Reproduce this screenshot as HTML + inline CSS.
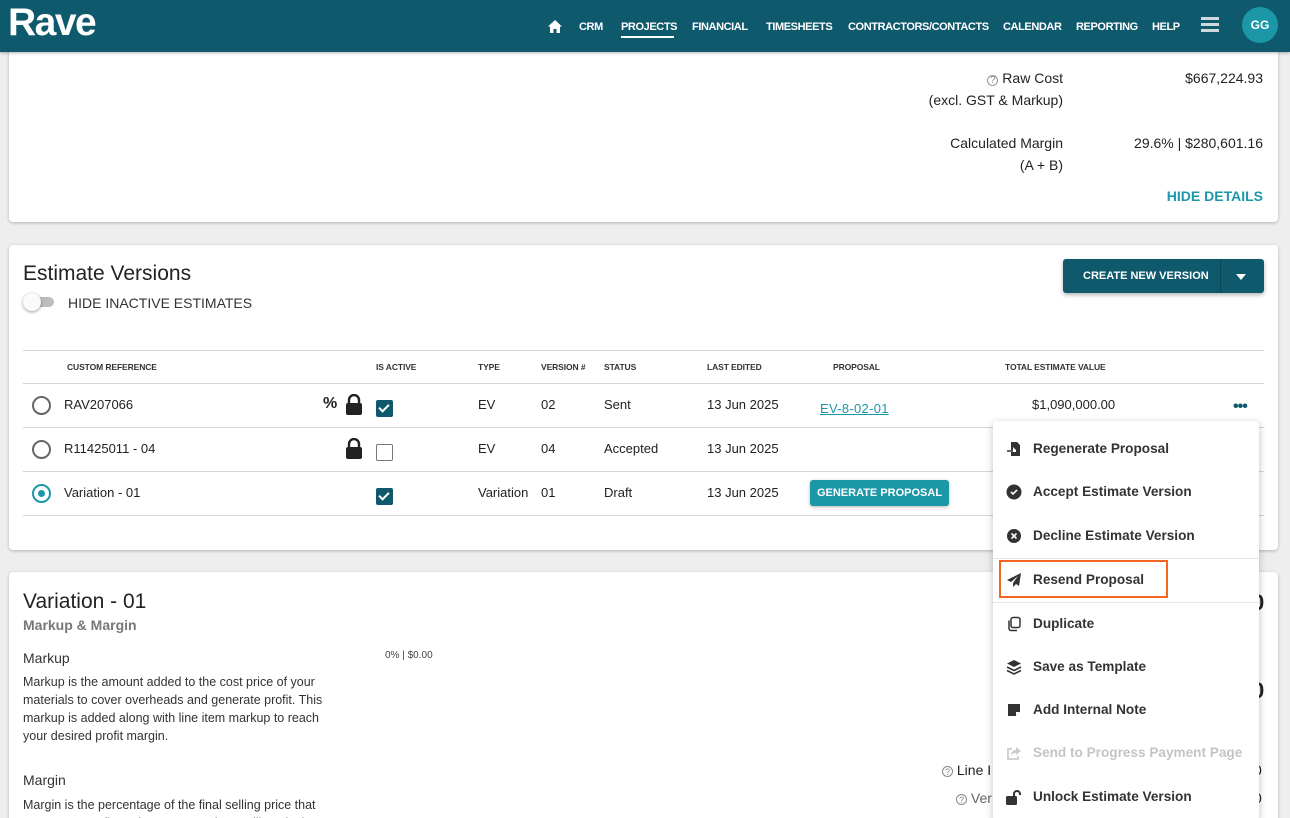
<!DOCTYPE html>
<html><head><meta charset="utf-8"><style>
*{box-sizing:border-box;margin:0;padding:0}
html,body{width:1290px;height:818px;overflow:hidden}
body{background:#eeeeee;font-family:"Liberation Sans",Arial,sans-serif;color:#222;position:relative}
.abs{position:absolute}
.hdr{left:0;top:0;width:1290px;height:52px;background:#0f596d;box-shadow:0 1px 3px rgba(0,0,0,.3);z-index:5}
.logo{left:8px;top:1px;color:#fff;font-size:39px;font-weight:bold;letter-spacing:-1.5px}
.nav{top:21px;color:#fff;font-size:11px;font-weight:bold;letter-spacing:-.4px}
.card{background:#fff;border-radius:4px;box-shadow:0 1px 3px rgba(0,0,0,.25)}
.r{text-align:right}
.th{font-size:8.5px;font-weight:bold;color:#333;letter-spacing:-.1px}
.td{font-size:13px;color:#222}
.line{height:1px;background:#d6d6d6}
.radio{width:19px;height:19px;border:2px solid #666;border-radius:50%}
.cb{width:17px;height:17px;border-radius:2px;background:#0f596d}
.cb:after{content:"";position:absolute;left:5px;top:2px;width:4px;height:8px;border:solid #fff;border-width:0 2px 2px 0;transform:rotate(45deg)}
.menu{left:993px;top:421px;width:266px;height:400px;background:#fff;border-radius:4px;box-shadow:0 2px 8px rgba(0,0,0,.25);z-index:4}
.mi{left:40px;font-size:13.6px;font-weight:bold;color:#333}
.ic{left:13px;width:16px;height:16px}
</style></head><body>
<div class="abs hdr">
 <div class="abs logo">Rave</div>
 <svg class="abs" style="left:548px;top:20px" width="14" height="13" viewBox="0 0 14 13"><path d="M7 0L0 6.5h2V13h3.5V9h3v4H12V6.5h2z" fill="#fff"/></svg>
 <div class="abs nav" style="left:579px">CRM</div>
 <div class="abs nav" style="left:621px">PROJECTS</div>
 <div class="abs" style="left:621px;top:36px;width:53px;height:2px;background:#fff"></div>
 <div class="abs nav" style="left:692px">FINANCIAL</div>
 <div class="abs nav" style="left:766px">TIMESHEETS</div>
 <div class="abs nav" style="left:848px">CONTRACTORS/CONTACTS</div>
 <div class="abs nav" style="left:1003px">CALENDAR</div>
 <div class="abs nav" style="left:1076px">REPORTING</div>
 <div class="abs nav" style="left:1152px">HELP</div>
 <div class="abs" style="left:1201px;top:17px;width:18px;height:3px;background:#cfd8dc;box-shadow:0 6px 0 #cfd8dc,0 12px 0 #cfd8dc"></div>
 <div class="abs" style="left:1242px;top:7px;width:36px;height:36px;border-radius:50%;background:#1b97a8;color:#fff;font-size:12px;font-weight:bold;text-align:center;line-height:36px">GG</div>
</div>

<div class="abs card" style="left:9px;top:30px;width:1269px;height:192px"></div>
<div class="abs r" style="left:900px;top:67px;width:163px;font-size:14px;line-height:22px;color:#222"><span style="font-size:10px;color:#888;border:1px solid #999;border-radius:50%;display:inline-block;width:11px;height:11px;line-height:10px;text-align:center">?</span> Raw Cost<br>(excl. GST &amp; Markup)</div>
<div class="abs r" style="left:1100px;top:70px;width:163px;font-size:14px;line-height:17px">$667,224.93</div>
<div class="abs r" style="left:900px;top:132px;width:163px;font-size:14px;line-height:22px">Calculated Margin<br>(A + B)</div>
<div class="abs r" style="left:1100px;top:135px;width:163px;font-size:14px;line-height:17px">29.6% | $280,601.16</div>
<div class="abs r" style="left:1100px;top:188px;width:163px;font-size:14px;font-weight:bold;color:#1b97a8">HIDE DETAILS</div>

<div class="abs card" style="left:9px;top:245px;width:1269px;height:305px"></div>
<div class="abs" style="left:23px;top:262px;font-size:21px;color:#222">Estimate Versions</div>
<div class="abs" style="left:27px;top:297px;width:27px;height:10px;border-radius:5px;background:#bdbdbd"></div>
<div class="abs" style="left:23px;top:293px;width:18px;height:18px;border-radius:50%;background:#fafafa;box-shadow:0 1px 3px rgba(0,0,0,.4)"></div>
<div class="abs" style="left:68px;top:295px;font-size:14px;color:#333">HIDE INACTIVE ESTIMATES</div>
<div class="abs" style="left:1063px;top:259px;width:201px;height:34px;background:#0f596d;border-radius:3px;box-shadow:0 2px 4px rgba(0,0,0,.3)"></div>
<div class="abs" style="left:1083px;top:270px;font-size:11px;font-weight:bold;color:#fff">CREATE NEW VERSION</div>
<div class="abs" style="left:1220px;top:259px;width:1px;height:34px;background:#0b4655"></div>
<div class="abs" style="left:1236px;top:274px;border:5px solid transparent;border-top:6px solid #fff"></div>

<div class="abs line" style="left:23px;top:350px;width:1241px"></div>
<div class="abs th" style="left:67px;top:362px">CUSTOM REFERENCE</div>
<div class="abs th" style="left:376px;top:362px">IS ACTIVE</div>
<div class="abs th" style="left:478px;top:362px">TYPE</div>
<div class="abs th" style="left:541px;top:362px">VERSION #</div>
<div class="abs th" style="left:604px;top:362px">STATUS</div>
<div class="abs th" style="left:707px;top:362px">LAST EDITED</div>
<div class="abs th" style="left:833px;top:362px">PROPOSAL</div>
<div class="abs th" style="left:1005px;top:362px">TOTAL ESTIMATE VALUE</div>
<div class="abs line" style="left:23px;top:383px;width:1241px"></div>
<div class="abs line" style="left:23px;top:427px;width:1241px"></div>
<div class="abs line" style="left:23px;top:471px;width:1241px"></div>
<div class="abs line" style="left:23px;top:515px;width:1241px"></div>

<div class="abs radio" style="left:32px;top:396px"></div>
<div class="abs td" style="left:64px;top:397px">RAV207066</div>
<div class="abs" style="left:323px;top:395px;font-size:16px;font-weight:bold">%</div>
<svg class="abs" style="left:345px;top:394px" width="18" height="21" viewBox="0 0 18 21"><path d="M4 9V6a5 5 0 0110 0v3" stroke="#222" stroke-width="2.4" fill="none"/><rect x="1" y="9" width="16" height="12" rx="2" fill="#222"/></svg>
<div class="abs cb" style="left:376px;top:400px"></div>
<div class="abs td" style="left:478px;top:397px">EV</div>
<div class="abs td" style="left:541px;top:397px">02</div>
<div class="abs td" style="left:604px;top:397px">Sent</div>
<div class="abs td" style="left:707px;top:397px">13 Jun 2025</div>
<div class="abs td" style="left:820px;top:401px;color:#1b97a8;text-decoration:underline;letter-spacing:.3px">EV-8-02-01</div>
<div class="abs td" style="left:1032px;top:397px">$1,090,000.00</div>
<div class="abs" style="left:1233px;top:398px;font-size:16px;font-weight:bold;color:#0f596d;letter-spacing:-1px">•••</div>

<div class="abs radio" style="left:32px;top:440px"></div>
<div class="abs td" style="left:64px;top:441px">R11425011 - 04</div>
<svg class="abs" style="left:345px;top:438px" width="18" height="21" viewBox="0 0 18 21"><path d="M4 9V6a5 5 0 0110 0v3" stroke="#222" stroke-width="2.4" fill="none"/><rect x="1" y="9" width="16" height="12" rx="2" fill="#222"/></svg>
<div class="abs" style="left:376px;top:444px;width:17px;height:17px;border:1.5px solid #777;border-radius:2px"></div>
<div class="abs td" style="left:478px;top:441px">EV</div>
<div class="abs td" style="left:541px;top:441px">04</div>
<div class="abs td" style="left:604px;top:441px">Accepted</div>
<div class="abs td" style="left:707px;top:441px">13 Jun 2025</div>

<div class="abs radio" style="left:32px;top:484px;border-color:#1b97a8"></div>
<div class="abs" style="left:38px;top:490px;width:7px;height:7px;border-radius:50%;background:#1b97a8"></div>
<div class="abs td" style="left:64px;top:485px">Variation - 01</div>
<div class="abs cb" style="left:376px;top:488px"></div>
<div class="abs td" style="left:478px;top:485px">Variation</div>
<div class="abs td" style="left:541px;top:485px">01</div>
<div class="abs td" style="left:604px;top:485px">Draft</div>
<div class="abs td" style="left:707px;top:485px">13 Jun 2025</div>
<div class="abs" style="left:810px;top:480px;width:139px;height:26px;background:#1b97a8;border-radius:3px;box-shadow:0 1px 3px rgba(0,0,0,.3);color:#fff;font-size:11px;font-weight:bold;text-align:center;line-height:26px">GENERATE PROPOSAL</div>

<div class="abs card" style="left:9px;top:572px;width:1269px;height:260px"></div>
<div class="abs" style="left:23px;top:590px;font-size:21px;color:#222">Variation - 01</div>
<div class="abs" style="left:23px;top:617px;font-size:14px;font-weight:bold;color:#777">Markup &amp; Margin</div>
<div class="abs" style="left:23px;top:650px;font-size:14px;color:#333">Markup</div>
<div class="abs" style="left:385px;top:650px;font-size:10px;color:#444">0% | $0.00</div>
<div class="abs" style="left:23px;top:673px;width:318px;font-size:12.5px;line-height:18px;color:#333">Markup is the amount added to the cost price of your materials to cover overheads and generate profit. This markup is added along with line item markup to reach your desired profit margin.</div>
<div class="abs" style="left:23px;top:772px;font-size:14px;color:#333">Margin</div>
<div class="abs" style="left:23px;top:796px;width:318px;font-size:12.5px;line-height:18px;color:#333">Margin is the percentage of the final selling price that represents profit. Truly represented, we will apply the</div>
<div class="abs" style="left:942px;top:762px;font-size:14px;color:#222"><span style="font-size:9px;border:1px solid #888;border-radius:50%;display:inline-block;width:11px;height:11px;line-height:10px;text-align:center;color:#888">?</span> Line I</div>
<div class="abs" style="left:956px;top:790px;font-size:14px;color:#666"><span style="font-size:9px;border:1px solid #888;border-radius:50%;display:inline-block;width:11px;height:11px;line-height:10px;text-align:center;color:#888">?</span> Ver</div>
<div class="abs" style="left:1252px;top:590px;font-size:22px;font-weight:bold">0</div>
<div class="abs" style="left:1252px;top:678px;font-size:22px;font-weight:bold">0</div>
<div class="abs" style="left:1254px;top:762px;font-size:14px">0</div>
<div class="abs" style="left:1254px;top:790px;font-size:14px">0</div>

<div class="abs menu">
 <svg class="abs ic" style="top:20px" viewBox="0 0 16 16"><path d="M5 1h6l3 3v11H5v-4h5V9L7 6v3H5z" fill="#333"/><path d="M1 10h6" stroke="#333" stroke-width="1.5"/></svg>
 <div class="abs mi" style="top:20px">Regenerate Proposal</div>
 <svg class="abs ic" style="top:63px" viewBox="0 0 16 16"><circle cx="8" cy="8" r="7.5" fill="#333"/><path d="M5 8l2 2 4-4" stroke="#fff" stroke-width="1.6" fill="none"/></svg>
 <div class="abs mi" style="top:63px">Accept Estimate Version</div>
 <svg class="abs ic" style="top:107px" viewBox="0 0 16 16"><circle cx="8" cy="8" r="7" fill="#333"/><path d="M5.5 5.5l5 5M10.5 5.5l-5 5" stroke="#fff" stroke-width="1.6"/></svg>
 <div class="abs mi" style="top:107px">Decline Estimate Version</div>
 <div class="abs" style="left:0;top:137px;width:266px;height:1px;background:#e2e6ea"></div>
 <div class="abs" style="left:6px;top:139px;width:169px;height:38px;border:2px solid #f26522"></div>
 <svg class="abs ic" style="top:151px" viewBox="0 0 16 16"><path d="M15 1L1 8l4 2 7-6-5 7v4l3-3 3 2z" fill="#333"/></svg>
 <div class="abs mi" style="top:151px">Resend Proposal</div>
 <div class="abs" style="left:0;top:181px;width:266px;height:1px;background:#e2e6ea"></div>
 <svg class="abs ic" style="top:195px" viewBox="0 0 16 16"><rect x="5" y="1.5" width="9" height="10" rx="2" stroke="#333" stroke-width="1.5" fill="none"/><path d="M3 4.5v8a2 2 0 002 2h6" stroke="#333" stroke-width="1.5" fill="none"/></svg>
 <div class="abs mi" style="top:195px">Duplicate</div>
 <svg class="abs ic" style="top:238px" viewBox="0 0 16 16"><path d="M8 1l7 3.5-7 3.5-7-3.5z" fill="#333"/><path d="M1 8l7 3.5L15 8M1 11.5L8 15l7-3.5" stroke="#333" stroke-width="1.6" fill="none"/></svg>
 <div class="abs mi" style="top:238px">Save as Template</div>
 <svg class="abs ic" style="top:281px" viewBox="0 0 16 16"><path d="M2 2h12v8l-4 4H2z" fill="#333"/><path d="M10 14v-4h4" fill="#fff"/></svg>
 <div class="abs mi" style="top:281px">Add Internal Note</div>
 <svg class="abs ic" style="top:324px" viewBox="0 0 16 16"><path d="M6 4H2v10h10v-3" stroke="#ccc" stroke-width="1.8" fill="none"/><path d="M10 2l5 4-5 4V8c-3 0-4 1-5 3 0-4 2-6 5-6z" fill="#ccc"/></svg>
 <div class="abs mi" style="top:324px;color:#c4c4c4">Send to Progress Payment Page</div>
 <svg class="abs ic" style="top:368px" viewBox="0 0 16 16"><rect x="0" y="7" width="11" height="9" rx="1.5" fill="#333"/><path d="M8 7V5a3 3 0 016 0v1" stroke="#333" stroke-width="2" fill="none"/></svg>
 <div class="abs mi" style="top:368px">Unlock Estimate Version</div>
</div>
</body></html>
